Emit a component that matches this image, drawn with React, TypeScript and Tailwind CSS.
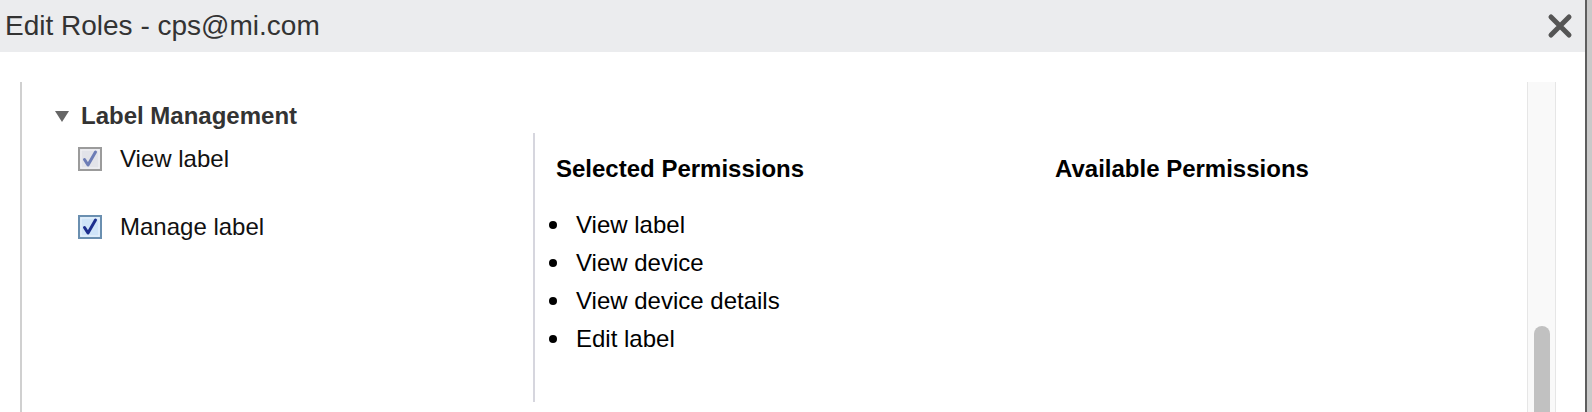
import React from "react";

const selected = ["View label", "View device", "View device details", "Edit label"];

function Check({ disabled }: { disabled?: boolean }) {
  const border = disabled ? "#9b9b9b" : "#6a8fb0";
  const fill = disabled ? "#e2e3e9" : "#cfe4f8";
  const tick = disabled ? "#6d7db6" : "#1d2f8e";
  return (
    <svg width="24" height="24" viewBox="0 0 24 24" className="shrink-0">
      <rect x="1" y="1" width="22" height="22" fill={fill} stroke={border} strokeWidth="2" />
      <rect x="3" y="3" width="18" height="18" fill="none" stroke="#ffffff" strokeOpacity="0.6" strokeWidth="1" />
      <path d="M6.5 12.5 L10 18 L17.5 5" fill="none" stroke={tick} strokeWidth="3" strokeLinecap="round" strokeLinejoin="round" />
    </svg>
  );
}

export default function App() {
  return (
    <div className="flex w-[1592px] h-[412px] overflow-hidden bg-white font-['Liberation_Sans',Arial,sans-serif]">
      <div className="w-[1585px] flex flex-col">
        <div className="h-[52px] shrink-0 bg-[#ebecee] flex items-center justify-between pl-[5px] pr-[12px]">
          <span className="text-[28px] leading-none text-[#333]">Edit Roles - cps@mi.com</span>
          <svg width="26" height="26" viewBox="0 0 26 26">
            <path d="M4 4 L22 22 M22 4 L4 22" stroke="#555" strokeWidth="5" strokeLinecap="round" />
          </svg>
        </div>

        <div className="flex flex-1 pt-[30px]">
          <div className="ml-[20px] flex-1 border-l-2 border-[#d0d0d0]">
            <div className="mt-[20px] pl-[33px] flex items-center gap-[12px] h-[28px]">
              <svg width="14" height="11" viewBox="0 0 14 11">
                <path d="M0 0 H14 L7 11 Z" fill="#666" />
              </svg>
              <span className="text-[24px] font-bold text-[#333] leading-none">Label Management</span>
            </div>

            <div className="mt-[3px] flex">
              <div className="w-[511px] pl-[56px] pt-[14px] flex flex-col gap-[44px]">
                <div className="flex items-center gap-[18px] h-[24px]">
                  <Check disabled />
                  <span className="text-[24px] leading-none text-[#111]">View label</span>
                </div>
                <div className="flex items-center gap-[18px] h-[24px]">
                  <Check />
                  <span className="text-[24px] leading-none text-[#111]">Manage label</span>
                </div>
              </div>

              <div className="w-[501px] border-l-2 border-[#d6d6de] pl-[21px] pt-[22px] pb-[44px]">
                <div className="text-[24px] font-bold leading-[28px] text-black">Selected Permissions</div>
                <ul className="mt-[23px] -ml-[9px]">
                  {selected.map((p) => (
                    <li key={p} className="flex items-center h-[38px] text-[24px] text-black">
                      <span className="w-[8px] h-[8px] rounded-full bg-black ml-[2px] mr-[19px]" />
                      {p}
                    </li>
                  ))}
                </ul>
              </div>

              <div className="flex-1 pl-[21px] pt-[22px]">
                <div className="text-[24px] font-bold leading-[28px] text-black">Available Permissions</div>
              </div>
            </div>
          </div>

          <div className="w-[29px] ml-[2px] bg-[#f9f9f9] border-x border-[#e6e6e6] flex flex-col justify-start pt-[244px] items-center mr-[29px]">
            <div className="w-[16px] h-[120px] rounded-full bg-[#c1c1c1]" />
          </div>
        </div>
      </div>
      <div className="flex-1 border-l-2 border-[#5e5e5e] bg-[#c9c9c9]" />
    </div>
  );
}
